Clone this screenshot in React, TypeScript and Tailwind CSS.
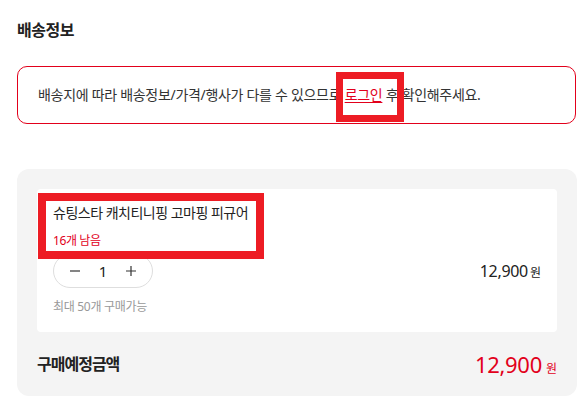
const FONT = { fontFamily: '"Noto Sans", "Noto Sans CJK KR", sans-serif' };

const Minus = () => (
    <svg width="12" height="12" viewBox="0 0 12 12" className="block">
        <path d="M1 6h10" stroke="#333" strokeWidth="1.2" />
    </svg>
);

const Plus = () => (
    <svg width="12" height="12" viewBox="0 0 12 12" className="block">
        <path d="M1 6h10M6 1v10" stroke="#333" strokeWidth="1.2" />
    </svg>
);

const Stepper = ({ qty }: { qty: number }) => {
    return (
        <div className="flex items-center w-[100px] h-[34px] rounded-full border border-[#dedede] bg-white">
            <button className="w-[42px] h-full flex items-center justify-center">
                <Minus />
            </button>
            <span className="flex-1 text-center text-[15px] text-[#222] leading-none">{qty}</span>
            <button className="w-[42px] h-full flex items-center justify-center">
                <Plus />
            </button>
        </div>
    );
};

export default function App() {
    return (
        <div className="relative w-[582px] h-[406px] bg-white pl-[17px] pr-[5px] pt-[19px]" style={FONT}>
            <h2 className="text-[16px] leading-[22px] font-bold text-[#222] tracking-[-0.5px]">배송정보</h2>

            <div className="mt-[25px] w-[559px] h-[58px] rounded-[10px] border border-[#e2001b] flex items-center px-[20px]">
                <p className="text-[14px] text-[#333] tracking-[-0.3px] leading-[20px]">
                    배송지에 따라 배송정보/가격/행사가 다를 수 있으므로{" "}
                    <a className="text-[#e2001b] underline underline-offset-2">로그인</a> 후 확인해주세요.
                </p>
            </div>

            <div className="mt-[45px] w-[560px] rounded-[12px] bg-[#f4f4f4] px-[20px] pt-[20px]">
                <div className="bg-white rounded-[4px] px-[16px] pt-[14px] pb-[16px]">
                    <p className="text-[14px] leading-[20px] text-[#222] tracking-[-0.5px]">슈팅스타 캐치티니핑 고마핑 피규어</p>
                    <p className="mt-[9px] text-[12px] leading-[18px] text-[#e2001b] tracking-[-0.4px]">16개 남음</p>
                    <div className="mt-[4px] flex items-center justify-between">
                        <Stepper qty={1} />
                        <p className="flex items-baseline text-[#222]">
                            <span className="text-[16px] tracking-[-0.3px]">12,900</span>
                            <span className="ml-[2px] text-[12px]">원</span>
                        </p>
                    </div>
                    <p className="mt-[10px] text-[12px] leading-[18px] text-[#999] tracking-[-0.3px]">최대 50개 구매가능</p>
                </div>

                <div className="h-[64px] flex items-center justify-between">
                    <span className="text-[16px] font-bold text-[#222] tracking-[-1px]">구매예정금액</span>
                    <p className="flex items-baseline text-[#e2001b]">
                        <span className="text-[22px] tracking-[-0.3px]">12,900</span>
                        <span className="ml-[4px] text-[12px]">원</span>
                    </p>
                </div>
            </div>

            {/* annotation boxes drawn over the screenshot */}
            <div className="absolute left-[336px] top-[72px] w-[68px] h-[50px] border-[7px] border-[#ed1c24]" />
            <div className="absolute left-[38px] top-[193px] w-[226px] h-[66px] border-[8px] border-[#ed1c24]" />
        </div>
    );
}
